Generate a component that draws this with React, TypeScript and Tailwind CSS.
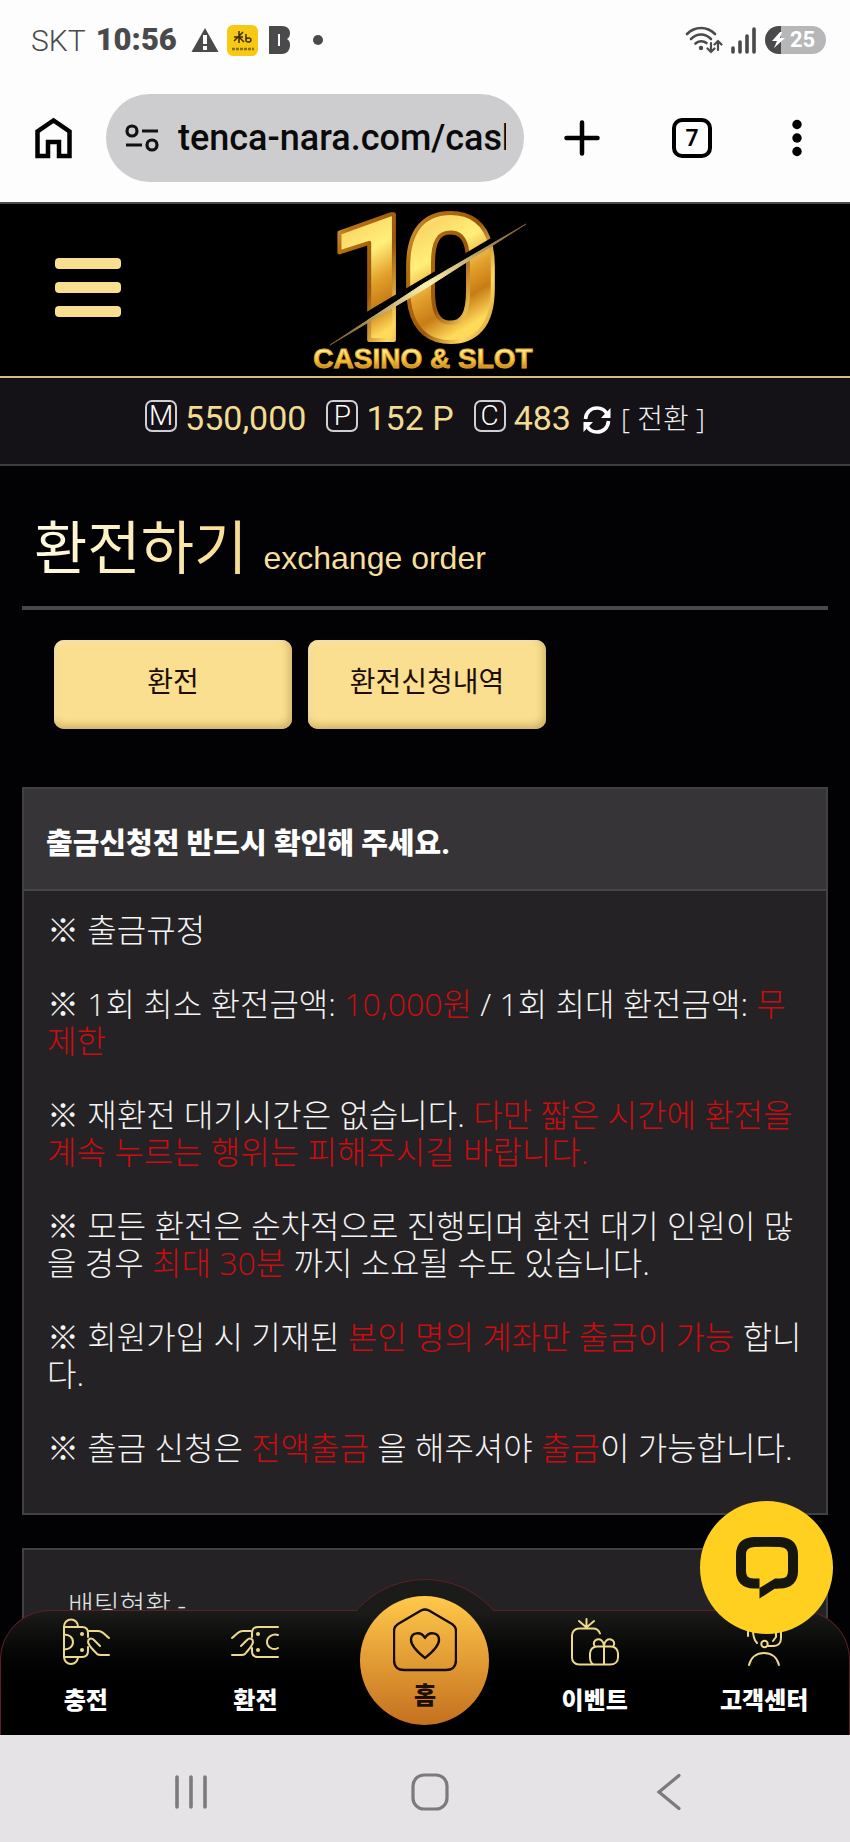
import React from 'react';

const kr = "font-['Roboto','Noto_Sans_CJK_KR',sans-serif]";

function StatusBar() {
    return (
        <div className="flex h-20 items-center justify-between pl-[31px] pr-6 text-[#4a4a4c]">
            <div className="flex items-center">
                <span className="text-[30px] font-light">SKT</span>
                <span className="ml-2.5 text-[31px] font-black">10:56</span>
                <svg className="ml-3.5" width="28" height="26" viewBox="0 0 28 26" aria-hidden="true">
                    <path d="M14 1 27.5 25H.5z" fill="#4a4a4c" />
                    <path d="M12 8h4v9h-4zM12 19h4v4h-4z" fill="#fdfdfe" />
                </svg>
                <svg className="ml-2" width="31" height="31" viewBox="0 0 31 31" aria-hidden="true">
                    <rect width="31" height="31" rx="6" fill="#f8c914" />
                    <path d="M7 12h9M12 6v12M16 7l-9 9M12 12l5 5M19 9v7c2 2 5 1 5-1s-3-3-5-1" fill="none" stroke="#3a2c08" strokeWidth="1.5" />
                    <path d="M5 24h22" stroke="#8a6f12" strokeWidth="2.400" strokeDasharray="3 1" />
                </svg>
                <svg className="ml-[11px]" width="22" height="28" viewBox="0 0 22 28" aria-hidden="true">
                    <path fillRule="evenodd" d="M0 0h13c5 0 8 3 8 7 0 3-1 5-3 6 2 1 3 3 3 6 0 5-3 9-8 9H0zM9 8v12h2V8z" fill="#4a4a4c" />
                </svg>
                <span className="ml-[22px] size-2.5 rounded-full bg-[#4a4a4c]" />
            </div>
            <div className="flex items-center">
                <svg width="38" height="28" viewBox="0 0 38 28" fill="none" stroke="#4a4a4c" strokeWidth="2.600" strokeLinecap="round" aria-hidden="true">
                    <path d="M2 8C10 0 22 0 30 8M6 13c6-6 14-6 20 0M10.500 17.500c3-3 8-3 11-.500" />
                    <circle cx="16" cy="22" r="1.200" fill="#4a4a4c" strokeWidth="2" />
                    <path d="M26 17v9m-3.500-3.500L26 26l3.500-3.500M33 24v-9m-3.500 3.500L33 15l3.500 3.500" strokeWidth="2.200" />
                </svg>
                <svg className="ml-2" width="26" height="27" viewBox="0 0 26 27" stroke="#4a4a4c" strokeWidth="3.600" strokeLinecap="round" aria-hidden="true">
                    <path d="M2 21v4M9 15v10M16 9v16M23 2v23" />
                </svg>
                <div className="ml-2 flex h-7 w-[61px] items-center overflow-hidden rounded-full bg-[linear-gradient(90deg,#4a4a4c_16px,#b7b7b9_16px)] pl-1.5 text-white">
                    <svg width="15" height="16" viewBox="0 0 15 16" aria-hidden="true">
                        <path d="M9 0 1 9h5l-3 7L14 6H9l2-6z" fill="#fff" />
                    </svg>
                    <span className="ml-1 text-[22px] font-bold leading-7">25</span>
                </div>
            </div>
        </div>
    );
}

function BrowserBar() {
    return (
        <div className="flex items-center pb-5 pl-[33px] pr-[42px] pt-3.5">
            <button type="button" aria-label="Home" className="mr-8">
                <svg width="41" height="44" viewBox="0 0 41 44" aria-hidden="true">
                    <path d="M4.500 40V15.500L20.500 4.500l16 11V40H26V26H15v14z" fill="none" stroke="#000" strokeWidth="4.500" />
                </svg>
            </button>
            <div className="flex h-[88px] min-w-0 flex-1 items-center rounded-full bg-[#cdcdcf] pl-[19px] pr-[18px]">
                <svg width="34" height="30" viewBox="0 0 34 30" fill="none" stroke="#111" strokeWidth="3.200" className="shrink-0" aria-hidden="true">
                    <circle cx="7" cy="8" r="5" />
                    <circle cx="27" cy="22" r="5" />
                    <path d="M17 8h16M1 22h16" />
                </svg>
                <input
                    type="text"
                    aria-label="Address"
                    defaultValue="tenca-nara.com/cash"
                    className="ml-[19px] w-0 min-w-0 flex-1 bg-transparent font-['Roboto',sans-serif] text-[36px] font-medium text-[#0a0a0a] outline-none"
                />
            </div>
            <button type="button" aria-label="New tab" className="ml-10">
                <svg width="36" height="36" viewBox="0 0 36 36" stroke="#000" strokeWidth="4.500" strokeLinecap="round" aria-hidden="true">
                    <path d="M18 2.500v31M2.500 18h31" />
                </svg>
            </button>
            <button type="button" aria-label="Tabs" className="ml-[72px] flex size-10 items-center justify-center rounded-[10px] border-4 border-black text-[23px] font-semibold leading-none">
                7
            </button>
            <button type="button" aria-label="Menu" className="ml-[74px]">
                <svg width="22" height="38" viewBox="0 0 22 38" aria-hidden="true">
                    <circle cx="11" cy="5.500" r="4.700" />
                    <circle cx="11" cy="19" r="4.700" />
                    <circle cx="11" cy="32.500" r="4.700" />
                </svg>
            </button>
        </div>
    );
}

function Logo() {
    return (
        <svg width="216" height="168" viewBox="0 0 216 168" className="overflow-visible" role="img" aria-label="10 CASINO & SLOT">
            <defs>
                <linearGradient id="gold" x1="0" y1="0" x2="0.300" y2="1">
                    <stop offset="0.150" stopColor="#fff6cf" />
                    <stop offset="0.300" stopColor="#fbd766" />
                    <stop offset="0.450" stopColor="#fff07a" />
                    <stop offset="0.600" stopColor="#e3a02c" />
                    <stop offset="0.720" stopColor="#c87c16" />
                    <stop offset="0.850" stopColor="#ffd95a" />
                </linearGradient>
                <linearGradient id="rim" x1="0" y1="0" x2="1" y2="1">
                    <stop offset="0" stopColor="#ffe9a0" />
                    <stop offset="0.250" stopColor="#b5720f" />
                    <stop offset="0.500" stopColor="#9a560a" />
                    <stop offset="0.700" stopColor="#ffd860" />
                    <stop offset="1" stopColor="#a25c0a" />
                </linearGradient>
                <linearGradient id="word" x1="0" y1="0" x2="0" y2="1">
                    <stop offset="0.200" stopColor="#fff39a" />
                    <stop offset="0.550" stopColor="#f6c83c" />
                    <stop offset="0.900" stopColor="#b86e10" />
                </linearGradient>
                <linearGradient id="slash" x1="0" y1="1" x2="1" y2="0">
                    <stop offset="0" stopColor="#7a5420" />
                    <stop offset="0.500" stopColor="#fff2b0" />
                    <stop offset="1" stopColor="#7a5420" />
                </linearGradient>
            </defs>
            <g fontFamily="Roboto, sans-serif" fontWeight="700" fontSize="176" fill="url(#gold)" stroke="url(#rim)" strokeWidth="4" strokeLinejoin="round">
                <text x="8" y="134">1</text>
                <text x="83" y="134">0</text>
            </g>
            <path d="M14 136 205 20l-4-4L14 127z" fill="#000" />
            <path d="M13 139 106 78 209 18 109 82z" fill="url(#slash)" stroke="url(#slash)" strokeWidth="1" />
            <text x="106" y="162" textAnchor="middle" fontFamily="'Liberation Sans', sans-serif" fontWeight="700" fontSize="28" fill="url(#word)" stroke="#e0a02c" strokeWidth="1">
                CASINO &amp; SLOT
            </text>
        </svg>
    );
}

function SiteHeader() {
    return (
        <header className="grid h-[174px] grid-cols-3 items-center border-b-2 border-[#d9bd7c] bg-black">
            <button type="button" aria-label="메뉴" className="mb-1.5 ml-[55px] flex w-[66px] flex-col gap-[13px]">
                <span className="h-[11px] rounded-sm bg-[#f9df90]" />
                <span className="h-[11px] rounded-sm bg-[#f9df90]" />
                <span className="h-[11px] rounded-sm bg-[#f9df90]" />
            </button>
            <div className="flex justify-center">
                <Logo />
            </div>
        </header>
    );
}

function Balance({ mark, amount }: { mark: string; amount: string }) {
    return (
        <div className="flex items-center gap-2">
            <span className="mb-1 flex size-8 items-center justify-center rounded-[7px] border-2 border-[#cfcfd4] text-[28px] font-light leading-none text-white">{mark}</span>
            <span className="text-[34px] leading-10 text-[#f1dc92]">{amount}</span>
        </div>
    );
}

function BalanceBar() {
    return (
        <div className="flex h-[88px] items-center justify-center border-b-2 border-[#3c3c3e] bg-[#141216] pb-1.5">
            <div className="flex items-center gap-5">
                <Balance mark="M" amount="550,000" />
                <Balance mark="P" amount="152 P" />
                <Balance mark="C" amount="483" />
            </div>
            <button type="button" aria-label="새로고침" className="ml-3 mt-1">
                <svg width="28" height="30" viewBox="0 0 28 30" fill="none" stroke="#fff" strokeWidth="3.600" aria-hidden="true">
                    <path d="M2.500 14C3 7 8 3 14 3c5 0 8 2 10 6M25.500 16c-.500 7-5.500 11-11.500 11-5 0-8-2-10-6" />
                    <path d="M27.500 3v10H18zM.500 27V17H10z" fill="#fff" stroke="none" />
                </svg>
            </button>
            <button type="button" className="ml-2.5 font-['Open_Sans','Noto_Sans_CJK_KR',sans-serif] text-[28px] font-light text-[#f0f0f2]">[ 전환 ]</button>
        </div>
    );
}

function Red({ children }: { children: React.ReactNode }) {
    return <span className="text-[#cc0c10]">{children}</span>;
}

function NoticePanel() {
    return (
        <section className="mt-[58px] border-2 border-[#414042] bg-[#242224]">
            <h2 className="border-b-2 border-[#464547] bg-[#363436] px-[22px] pb-[25px] pt-[35px] text-[29px] font-black leading-10 text-white">
                출금신청전 반드시 확인해 주세요.
            </h2>
            <div className="flex flex-col gap-[37px] whitespace-nowrap px-[23px] pb-[47px] pt-5 font-['Open_Sans','Noto_Sans_CJK_KR',sans-serif] text-[32px] font-light leading-[37px] text-[#f4f4f4]">
                <p>※ 출금규정</p>
                <p>
                    ※ 1회 최소 환전금액: <Red>10,000원</Red> / 1회 최대 환전금액: <Red>무<br />제한</Red>
                </p>
                <p>
                    ※ 재환전 대기시간은 없습니다. <Red>다만 짧은 시간에 환전을<br />계속 누르는 행위는 피해주시길 바랍니다.</Red>
                </p>
                <p>
                    ※ 모든 환전은 순차적으로 진행되며 환전 대기 인원이 많<br />을 경우 <Red>최대 30분</Red> 까지 소요될 수도 있습니다.
                </p>
                <p>
                    ※ 회원가입 시 기재된 <Red>본인 명의 계좌만 출금이 가능</Red> 합니<br />다.
                </p>
                <p>
                    ※ 출금 신청은 <Red>전액출금</Red> 을 해주셔야 <Red>출금</Red>이 가능합니다.
                </p>
            </div>
        </section>
    );
}

function NavItem({ label, children }: { label: string; children: React.ReactNode }) {
    return (
        <a href="#" className="flex flex-col items-center pt-[7px] text-[24px] font-black leading-8 text-white">
            <svg width="48" height="48" viewBox="0 0 48 48" fill="none" stroke="#ecd98c" strokeWidth="2" strokeLinecap="round" strokeLinejoin="round" className="mb-[19px]" aria-hidden="true">
                {children}
            </svg>
            {label}
        </a>
    );
}

function BottomNav() {
    return (
        <nav className="absolute inset-x-0 bottom-0 h-[125px] rounded-t-[50px] border border-b-0 border-[#5c2127] bg-gradient-to-b from-[#1b1c1a] to-black to-75%">
            {/* raised part behind the home button */}
            <div className="absolute -top-8 left-1/2 h-[33px] w-[138px] -translate-x-1/2 overflow-hidden">
                <div className="-ml-[23px] size-[184px] rounded-full border border-[#5c2127] bg-[#1b1c1a]" />
            </div>
            <div className="relative grid grid-cols-5">
                <NavItem label="충전">
                    <path d="M2 39V8.500a7 7 0 0 1 14 0M2 39a7 7 0 0 0 14 0M2 9h18c4 0 6 2 6 6v4M2 39h18c4 0 6-2 6-6v-4M2 17c4-1 9 2 9 7s-5 8-9 7" />
                    <path d="M27 13h9c5 0 7 4 11 7M38 28l-6-6c-3-3-6-1-6 2 1 5 6 8 9 12 1 1 2 1 4 1h8" />
                    <path d="M20 16h.010M20 32h.010" strokeWidth="4" />
                </NavItem>
                <NavItem label="환전">
                    <path d="M47 9H27c-4 0-6 2-6 6v4M47 39H27c-4 0-6-2-6-6v-3M47 17c-5-2-11 2-11 7s6 9 11 6" />
                    <path d="M1 20c4-3 6-7 11-7h8M10 28l6-6c3-3 6-1 6 2-1 5-5 8-8 12-1 1-2 1-4 1H1" />
                    <path d="M27 16h.010M27 32h.010" strokeWidth="4" />
                </NavItem>
                <a href="#" className="-mt-[15px] flex size-[129px] flex-col items-center justify-self-center rounded-full bg-gradient-to-b from-[#ffc94a] to-[#c4701f] pt-3 text-[24px] font-black leading-8 text-[#1d0f04]">
                    <svg width="64" height="64" viewBox="0 0 64 64" fill="none" stroke="#140b02" strokeWidth="2.400" strokeLinejoin="round" className="mb-2" aria-hidden="true">
                        <path d="M28 2.500 5 16c-3 2-4 4-4 7v29c0 7 4 10 10 10h42c6 0 10-3 10-10V23c0-3-1-5-4-7L36 2.500c-3-1.500-5-1.500-8 0z" />
                        <path d="M32 50c-5-4-14-11-14-18 0-8 10-9 14-2 4-7 14-6 14 2 0 7-9 14-14 18z" />
                    </svg>
                    홈
                </a>
                <NavItem label="이벤트">
                    <path d="M15.500 9.500v-8.500M15.500 9.500 8 3M15.500 9.500 23 3M29 15.500c-1-3-3-5-7-5H8c-4 0-7 3-7 7v22c0 4 3 7 7 7h31c5 0 8-3 8-7v-4c0-4-3-7-7-7H26c-4 0-7 3-7 7v4c0 4 2 7 5 7M33 28.500v18" />
                    <path d="M33 28c0-5-4-7.500-7-6.500s-4 4-2.500 6.500M33 28c0-5 4-7.500 7-6.500s4 4 2.500 6.500" />
                </NavItem>
                <NavItem label="고객센터">
                    <path d="M9 47c2-8 8-12 15-12s13 4 15 12M13 12c0 6 1 10 4 13M36 12v7l-3 4M8 12v6M41 12v8c0 5-3 8-7 8h-6" />
                    <circle cx="24.500" cy="26" r="3.200" />
                </NavItem>
            </div>
        </nav>
    );
}

function ChatButton() {
    return (
        <button type="button" aria-label="채팅" className="absolute bottom-[101px] right-[17px] flex size-[133px] items-center justify-center rounded-full bg-[#ffd01f]">
            <svg width="62" height="62" viewBox="0 0 62 62" aria-hidden="true">
                <path d="M23.500 46.500H18C9 46.500 5 42 5 34V18C5 10 9 5.500 18 5 27 4.600 35 4.600 44 5c9 .500 13 5 13 13v16c0 8-4 12.500-13 12.500h-5" fill="none" stroke="#15160f" strokeWidth="10" />
                <path d="M23.500 51 39 41.500l3 10h-3L23.500 61.500z" fill="#15160f" />
            </svg>
        </button>
    );
}

function SystemNav() {
    return (
        <div className="grid h-[107px] grid-cols-[1fr_auto_1fr] items-center gap-[203px] bg-[#e6e3e6] pl-2.5 pt-1.5">
            <button type="button" aria-label="최근 앱" className="justify-self-end">
                <svg width="34" height="36" viewBox="0 0 34 36" stroke="#7c7a7d" strokeWidth="3.600" strokeLinecap="round" aria-hidden="true">
                    <path d="M3 3v30M17 3v30M31 3v30" />
                </svg>
            </button>
            <button type="button" aria-label="홈 화면">
                <svg width="38" height="38" viewBox="0 0 38 38" aria-hidden="true">
                    <rect x="2" y="2" width="34" height="34" rx="11" fill="none" stroke="#7c7a7d" strokeWidth="3.200" />
                </svg>
            </button>
            <button type="button" aria-label="뒤로" className="justify-self-start pl-1">
                <svg width="26" height="38" viewBox="0 0 26 38" fill="none" stroke="#7c7a7d" strokeWidth="3.200" strokeLinecap="round" aria-hidden="true">
                    <path d="M23 2.500 3 19l20 16.500" />
                </svg>
            </button>
        </div>
    );
}

export default function App() {
    return (
        <div lang="ko" className={`flex h-screen flex-col overflow-hidden bg-[#fdfdfe] ${kr}`}>
            <StatusBar />
            <BrowserBar />
            <div className="relative min-h-0 flex-1 overflow-hidden border-t-2 border-[#4a4a4c] bg-[#020103]">
                <SiteHeader />
                <BalanceBar />
                <main className="px-[22px]">
                    <h1 className="flex items-baseline gap-4 border-b-4 border-[#48484a] pb-2 pl-3 pt-[43px] leading-[80px]">
                        <span className="bg-gradient-to-r from-[#fffbe2] to-[#f8dc8c] bg-clip-text text-[58px] text-transparent">환전하기</span>
                        <span className="font-['Liberation_Sans',sans-serif] text-[32px] text-[#f5df9c]">exchange order</span>
                    </h1>
                    <div className="mt-[30px] flex gap-4 px-8 text-[28px] text-[#1c0f06]">
                        <button type="button" className="h-[89px] w-[238px] rounded-[10px] bg-[#fadf90] pb-1 shadow-[inset_-2px_-3px_8px_#c9ab62,inset_2px_2px_4px_#fff0c0]">환전</button>
                        <button type="button" className="h-[89px] w-[238px] rounded-[10px] bg-[#fadf90] pb-1 shadow-[inset_-2px_-3px_8px_#c9ab62,inset_2px_2px_4px_#fff0c0]">환전신청내역</button>
                    </div>
                    <NoticePanel />
                    <section className="mt-[33px] h-60 border-2 border-[#414042] bg-[#242224] px-11 pt-[37px] text-[28px] font-light leading-10 text-[#e2e2e2]">
                        배팅현황 -
                    </section>
                </main>
                <BottomNav />
                <ChatButton />
            </div>
            <SystemNav />
        </div>
    );
}
